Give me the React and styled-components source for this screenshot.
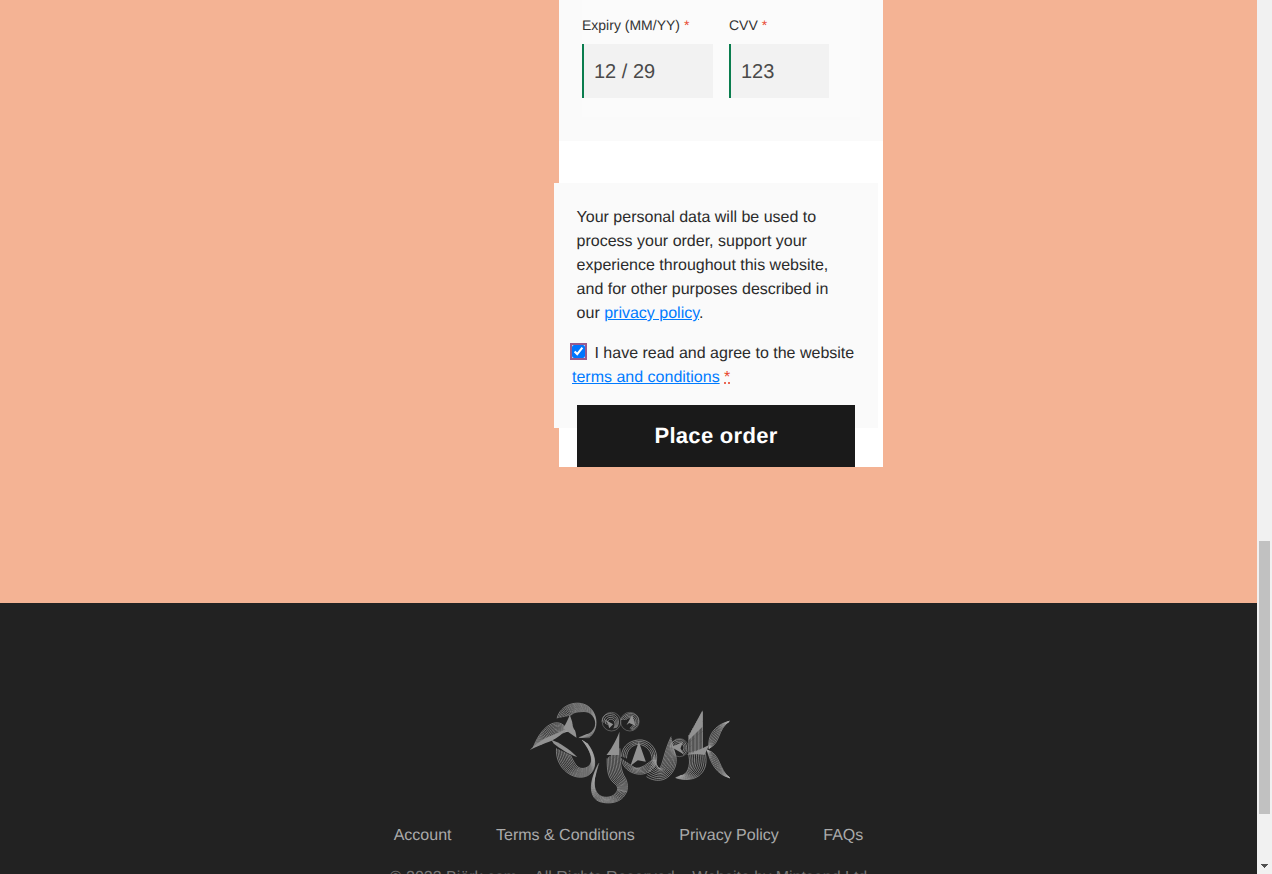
import React from "react";
import styled, { createGlobalStyle } from "styled-components";

const Global = createGlobalStyle`
  html, body { margin: 0; padding: 0; height: 874px; overflow: hidden; background: #222; }
  body { font-family: "Liberation Sans", Arial, sans-serif; text-rendering: geometricPrecision; }
`;

const Shell = styled.div`
  display: flex;
  width: 1272px;
  height: 874px;
  overflow: hidden;
`;
const Page = styled.div`
  width: 1257px;
  display: flex;
  flex-direction: column;
`;
const Main = styled.main`
  height: 603px;
  flex: none;
  background: #f4b394;
  padding-left: 559px;
  box-sizing: border-box;
`;
const Column = styled.div`
  width: 324px;
  height: 467px;
  background: #fff;
`;
const PaymentCard = styled.section`
  height: 141px;
  box-sizing: border-box;
  background: #fafafa;
  padding: 0 23px;
`;
const PaymentInner = styled.div`
  height: 117px;
  box-sizing: border-box;
  background: #fbfbfb;
  padding-top: 15px;
  display: flex;
  gap: 16px;
`;
const Field = styled.label`
  display: flex;
  flex-direction: column;
  width: ${(p) => p.$width}px;
`;
const FieldLabel = styled.span`
  font-size: 14px;
  line-height: 20px;
  color: #333;
  margin-bottom: 9px;
  white-space: nowrap;
`;
const Star = styled.span`
  color: #e8452c;
`;
const CardInput = styled.input`
  width: 100%;
  height: 54px;
  box-sizing: border-box;
  border: 0;
  border-left: 2px solid #0a7d4e;
  border-radius: 0;
  background: #f2f2f2;
  padding: 2px 0 0 10px;
  margin: 0;
  font: 20px "Liberation Sans", Arial, sans-serif;
  text-rendering: geometricPrecision;
  color: #4a4a4a;
  outline: none;
`;
const TermsPanel = styled.section`
  width: 324px;
  height: 245px;
  margin: 42px 0 0 -5px;
  background: #fafafa;
  padding-top: 23px;
  box-sizing: border-box;
  font-size: 16px;
  line-height: 24px;
  color: #2b2b2b;
`;
const Notice = styled.p`
  margin: 0 0 16px 22.6px;
  width: 262px;
`;
const TextLink = styled.a`
  color: #007bff;
  text-decoration: underline;
`;
const Agree = styled.label`
  display: block;
  margin-left: 18px;
  width: 295px;
`;
const Check = styled.input`
  width: 13px;
  height: 13px;
  margin: 0 5px 0 0;
  vertical-align: 0;
  outline: 2px solid #985a8e;
  outline-offset: 0;
`;
const Required = styled.abbr`
  color: #e8452c;
  text-decoration: underline dotted;
`;
const PlaceOrder = styled.button`
  display: block;
  width: 278px;
  height: 62px;
  margin: 15px 0 0 23px;
  border: 0;
  padding: 0;
  background: #1a1a1a;
  color: #fff;
  font: bold 22px "Liberation Sans", Arial, sans-serif;
  letter-spacing: 0.3px;
  text-rendering: geometricPrecision;
`;
const Footer = styled.footer`
  flex: 1;
  background: #222;
  padding-top: 92px;
  overflow: hidden;
  display: flex;
  flex-direction: column;
  align-items: center;
`;
const Logo = styled.svg`
  display: block;
  flex: none;
`;
const FooterNav = styled.nav`
  display: flex;
  gap: 44.5px;
  margin-top: 17px;
  font-size: 16px;
  line-height: 18px;
`;
const FooterLink = styled.a`
  color: #aaa;
  text-decoration: none;
`;
const Copyright = styled.p`
  margin: 24px 0 0;
  font-size: 16px;
  line-height: 18px;
  color: #777;
  white-space: nowrap;
`;
const ScrollTrack = styled.div`
  width: 15px;
  height: 874px;
  flex: none;
  background: #f1f1f1;
  display: flex;
  flex-direction: column;
  align-items: center;
`;
const ScrollThumb = styled.div`
  width: 11px;
  height: 273px;
  margin-top: 541px;
  background: #c1c1c1;
`;
const ScrollArrow = styled.svg`
  display: block;
  margin-top: 50px;
`;

/* Line-art ribbon: interpolates between two cubic chains to give hatch strokes. */
const lerp = (a, b, t) => a + (b - a) * t;
function ribbonPaths(a, b, n) {
  const out = [];
  for (let i = 0; i < n; i++) {
    const t = n === 1 ? 0 : i / (n - 1);
    const pts = a.map((p, k) => [lerp(p[0], b[k][0], t), lerp(p[1], b[k][1], t)]);
    let d = `M${pts[0][0].toFixed(1)} ${pts[0][1].toFixed(1)}`;
    for (let k = 1; k + 2 < pts.length; k += 3) {
      d += `C${pts[k].join(" ")} ${pts[k + 1].join(" ")} ${pts[k + 2].join(" ")}`;
    }
    out.push(d);
  }
  return out;
}

const ribbons = [
  // B upper bowl
  { a: [[110, 70], [118, 30], [170, 12], [203, 34], [232, 54], [236, 105], [205, 128]],
    b: [[150, 62], [160, 48], [185, 46], [206, 60], [230, 82], [218, 115], [175, 128]], n: 10 },
  // B left leaf hatch
  { a: [[38, 158], [58, 105], [92, 74], [122, 86], [130, 90], [138, 98], [142, 108]],
    b: [[62, 148], [85, 130], [105, 118], [118, 116], [126, 114], [135, 112], [142, 108]], n: 10 },
  // B lower bowl
  { a: [[108, 160], [104, 215], [150, 252], [188, 246], [228, 240], [235, 190], [200, 145]],
    b: [[150, 180], [165, 215], [175, 222], [190, 220], [218, 215], [225, 185], [185, 135]], n: 10 },
  // J stem
  { a: [[260, 190], [260, 230], [262, 250], [285, 268], [290, 272], [292, 278], [292, 285]],
    b: [[298, 160], [300, 200], [298, 225], [315, 250], [322, 265], [322, 280], [318, 292]], n: 10 },
  // J hook
  { a: [[292, 283], [285, 305], [262, 310], [245, 305], [225, 298], [218, 275], [222, 248]],
    b: [[318, 290], [305, 325], [265, 328], [238, 320], [210, 310], [200, 270], [235, 205]], n: 8 },
  // umlaut dots
  { a: [[245, 80], [245, 60], [262, 52], [280, 58], [295, 65], [298, 85], [288, 98]],
    b: [[260, 90], [258, 76], [268, 70], [276, 74], [284, 78], [286, 88], [280, 100]], n: 4 },
  { a: [[302, 75], [310, 55], [335, 50], [348, 62], [360, 75], [355, 95], [335, 105]],
    b: [[315, 75], [320, 68], [330, 65], [338, 72], [344, 80], [342, 90], [328, 100]], n: 4 },
  // O ring
  { a: [[303, 185], [303, 150], [335, 132], [365, 135], [395, 140], [412, 170], [408, 195]],
    b: [[318, 190], [318, 165], [335, 148], [355, 148], [378, 150], [395, 170], [395, 195]], n: 4 },
  { a: [[303, 190], [305, 225], [345, 245], [375, 235], [395, 228], [408, 210], [408, 195]],
    b: [[335, 212], [345, 225], [360, 218], [372, 212], [382, 205], [392, 198], [395, 195]], n: 7 },
  // C column
  { a: [[378, 245], [410, 265], [445, 258], [462, 220], [470, 200], [468, 185], [462, 170]],
    b: [[402, 180], [405, 205], [410, 215], [416, 222], [428, 210], [430, 170], [452, 125]], n: 11 },
  // small circle
  { a: [[449, 158], [449, 140], [470, 130], [485, 135], [500, 142], [505, 170], [488, 180]],
    b: [[460, 155], [462, 145], [474, 140], [482, 144], [492, 150], [494, 165], [482, 172]], n: 3 },
  // K stem
  { a: [[505, 120], [505, 135], [505, 150], [505, 170], [505, 172], [505, 175], [505, 178]],
    b: [[546, 50], [546, 90], [546, 130], [546, 165], [546, 168], [546, 172], [546, 178]], n: 11 },
  // K bowl
  { a: [[465, 248], [505, 262], [550, 250], [556, 205], [558, 190], [556, 175], [548, 160]],
    b: [[480, 242], [500, 240], [512, 215], [505, 180], [505, 178], [506, 176], [508, 172]], n: 10 },
  // K upper arm
  { a: [[566, 160], [560, 125], [580, 90], [626, 79], [626, 79], [626, 79], [626, 79]],
    b: [[566, 160], [600, 145], [590, 105], [626, 79], [626, 79], [626, 79], [626, 79]], n: 7 },
  // K lower arm
  { a: [[560, 165], [570, 205], [590, 240], [627, 248], [627, 248], [627, 248], [627, 248]],
    b: [[560, 165], [600, 175], [595, 225], [627, 248], [627, 248], [627, 248], [627, 248]], n: 7 },
];

const solids = [
  "M28 165 C50 145 68 132 88 124 C108 116 125 108 142 100 C128 115 110 130 92 138 C70 146 48 155 28 165Z",
  "M148 60 C140 78 134 90 128 100 L142 110 L168 128 C166 105 156 85 148 60Z",
  "M92 134 C115 142 145 160 170 186 C145 178 118 160 100 146Z",
  "M297 110 C285 140 270 165 258 180 L296 180 C296 155 296 130 297 110Z",
  "M250 72 L278 88 L266 100 L262 84Z",
  "M335 60 L318 90 L326 84 L345 92Z",
  "M355 140 L330 212 L352 196 L376 200Z",
  "M452 156 L488 140 L480 160 L490 178Z",
  "M546 46 L505 122 L505 135 L546 95Z",
  "M496 180 C515 175 535 165 566 150 L552 180 C535 175 515 178 496 180Z",
];

const hollows = [
  { cx: 190, cy: 85, r: 34 },
];

function BjorkLogo() {
  return (
    <Logo width="220" height="115" viewBox="-4.5 0 660 345" aria-label="Björk">
      <g fill="none" stroke="#ababab" strokeWidth="2">
        {ribbons.flatMap((r, i) =>
          ribbonPaths(r.a, r.b, r.n).map((d, j) => <path key={`${i}-${j}`} d={d} />)
        )}
      </g>
      <g fill="#929292">
        {solids.map((d, i) => <path key={i} d={d} />)}
      </g>
      <g fill="#222">
        {hollows.map((c, i) => <circle key={i} {...c} />)}
      </g>
      <g fill="none" stroke="#8f8f8f" strokeWidth="1.5">
        <circle cx="273" cy="80" r="28" />
        <circle cx="328" cy="80" r="28" />
        <circle cx="477" cy="158" r="27" />
      </g>
    </Logo>
  );
}

export default function App() {
  return (
    <>
      <Global />
      <Shell>
        <Page>
          <Main>
            <Column>
              <PaymentCard>
                <PaymentInner>
                  <Field $width={131}>
                    <FieldLabel>Expiry (MM/YY) <Star>*</Star></FieldLabel>
                    <CardInput defaultValue="12 / 29" />
                  </Field>
                  <Field $width={100}>
                    <FieldLabel>CVV <Star>*</Star></FieldLabel>
                    <CardInput defaultValue="123" />
                  </Field>
                </PaymentInner>
              </PaymentCard>
              <TermsPanel>
                <Notice>
                  Your personal data will be used to process your order, support your experience
                  throughout this website, and for other purposes described in our{" "}
                  <TextLink href="#">privacy policy</TextLink>.
                </Notice>
                <Agree>
                  <Check type="checkbox" defaultChecked /> I have read and agree to the website{" "}
                  <TextLink href="#">terms and conditions</TextLink>{" "}
                  <Required>*</Required>
                </Agree>
                <PlaceOrder type="button">Place order</PlaceOrder>
              </TermsPanel>
            </Column>
          </Main>
          <Footer>
            <BjorkLogo />
            <FooterNav>
              <FooterLink href="#">Account</FooterLink>
              <FooterLink href="#">Terms &amp; Conditions</FooterLink>
              <FooterLink href="#">Privacy Policy</FooterLink>
              <FooterLink href="#">FAQs</FooterLink>
            </FooterNav>
            <Copyright>© 2023 Björk.com – All Rights Reserved – Website by Mintsand Ltd</Copyright>
          </Footer>
        </Page>
        <ScrollTrack>
          <ScrollThumb />
          <ScrollArrow width="7" height="5" viewBox="0 0 7 5">
            <path d="M0 0H7V1H6V2H5V3H4V4H3V3H2V2H1V1H0Z" fill="#505050" />
          </ScrollArrow>
        </ScrollTrack>
      </Shell>
    </>
  );
}
